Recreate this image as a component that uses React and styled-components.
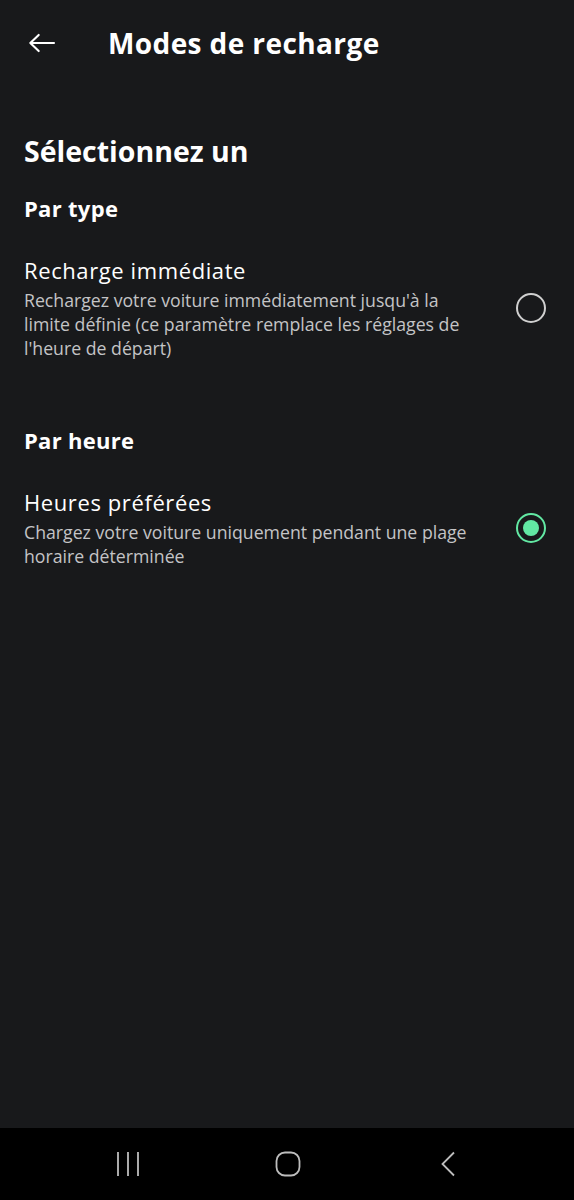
import React, { useState } from "react";
import styled, { createGlobalStyle } from "styled-components";

const GlobalStyle = createGlobalStyle`
  html, body {
    margin: 0;
    padding: 0;
    background: #18191b;
  }
  * { box-sizing: border-box; }
`;

// line breaks follow the app's wrapping
const modes = [
  {
    group: "Par type",
    items: [
      {
        id: "now",
        title: "Recharge immédiate",
        text: "Rechargez votre voiture immédiatement jusqu'à la\nlimite définie (ce paramètre remplace les réglages de\nl'heure de départ)",
      },
    ],
  },
  {
    group: "Par heure",
    items: [
      {
        id: "hours",
        title: "Heures préférées",
        text: "Chargez votre voiture uniquement pendant une plage\nhoraire déterminée",
      },
    ],
  },
];

const App = () => {
  const [selected, setSelected] = useState("hours");

  return (
    <Screen>
      <GlobalStyle />
      <Header>
        <BackButton aria-label="Retour">
          <svg width="36" height="36" viewBox="0 0 24 24" fill="none">
            <path
              d="M20 12H4.2M9.8 6.6L4.2 12l5.6 5.4"
              stroke="#fff"
              strokeWidth="1.4"
              strokeLinecap="round"
              strokeLinejoin="round"
            />
          </svg>
        </BackButton>
        <Title>Modes de recharge</Title>
      </Header>
      <Content>
        <Heading>Sélectionnez un</Heading>
        {modes.map((g, i) => (
          <Group key={g.group} $first={i === 0}>
            <GroupLabel>{g.group}</GroupLabel>
            {g.items.map((item) => (
              <Option key={item.id} onClick={() => setSelected(item.id)}>
                <OptionText>
                  <OptionTitle>{item.title}</OptionTitle>
                  <OptionDesc>{item.text}</OptionDesc>
                </OptionText>
                <Radio $on={selected === item.id} />
              </Option>
            ))}
          </Group>
        ))}
      </Content>
      <NavBar>
        <NavItem>
          <svg width="24" height="26" viewBox="0 0 24 26">
            <path d="M2 1v24M12 1v24M22 1v24" stroke="#bdbdbd" strokeWidth="1.8" />
          </svg>
        </NavItem>
        <NavItem>
          <svg width="26" height="26" viewBox="0 0 26 26">
            <rect x="1.5" y="1.5" width="23" height="23" rx="8.5" fill="none" stroke="#bdbdbd" strokeWidth="1.8" />
          </svg>
        </NavItem>
        <NavItem>
          <svg width="16" height="26" viewBox="0 0 16 26">
            <path d="M14 1.5L2.5 13 14 24.5" fill="none" stroke="#bdbdbd" strokeWidth="1.8" />
          </svg>
        </NavItem>
      </NavBar>
    </Screen>
  );
};

export default App;

const Screen = styled.div`
  width: 574px;
  height: 1200px;
  background: #18191b;
  display: flex;
  flex-direction: column;
  color: #fff;
`;

const Header = styled.div`
  height: 86px;
  display: flex;
  align-items: center;
  padding-left: 24px;
`;

const BackButton = styled.div`
  width: 36px;
  height: 36px;
  display: flex;
  align-items: center;
  justify-content: center;
  margin-right: 48px;
`;

const Title = styled.h1`
  margin: 0;
  font-family: "Open Sans", "Liberation Sans", sans-serif;
  font-weight: 700;
  font-size: 28px;
  letter-spacing: 0.4px;
  color: #fff;
`;

const Content = styled.div`
  flex: 1;
  padding: 46px 24px 0;
`;

const Heading = styled.h2`
  margin: 0;
  font-family: "Open Sans", "Liberation Sans", sans-serif;
  font-weight: 700;
  font-size: 28.5px;
  line-height: 38px;
`;

const Group = styled.div`
  margin-top: ${(p) => (p.$first ? "24px" : "66px")};
`;

const GroupLabel = styled.div`
  font-family: "Open Sans", "Liberation Sans", sans-serif;
  font-weight: 700;
  font-size: 22px;
  letter-spacing: 0.3px;
  line-height: 28px;
  margin-bottom: 34px;
`;

const Option = styled.div`
  display: flex;
  align-items: center;
  justify-content: space-between;
  gap: 12px;
  cursor: pointer;
`;

const OptionText = styled.div`
  flex: 1;
  min-width: 0;
`;

const OptionTitle = styled.div`
  font-family: "Open Sans", "Liberation Sans", sans-serif;
  font-size: 22px;
  letter-spacing: 0.6px;
  line-height: 28px;
  color: #fff;
  margin-bottom: 4px;
`;

const OptionDesc = styled.div`
  font-family: "Open Sans", "Liberation Sans", sans-serif;
  font-size: 17.7px;
  line-height: 24px;
  color: #c4c4c6;
  white-space: pre-line;
`;

const Radio = styled.span`
  width: 30px;
  height: 30px;
  border-radius: 50%;
  margin-right: 4px;
  flex-shrink: 0;
  border: 2.5px solid ${(p) => (p.$on ? "#62e8a3" : "#d0d0d0")};
  display: flex;
  align-items: center;
  justify-content: center;
  &::after {
    content: "";
    width: 16px;
    height: 16px;
    border-radius: 50%;
    background: #62e8a3;
    display: ${(p) => (p.$on ? "block" : "none")};
  }
`;

const NavBar = styled.div`
  height: 72px;
  background: #000;
  display: flex;
  align-items: center;
  padding-left: 48px;
`;

const NavItem = styled.div`
  width: 160px;
  display: flex;
  justify-content: center;
  align-items: center;
`;
